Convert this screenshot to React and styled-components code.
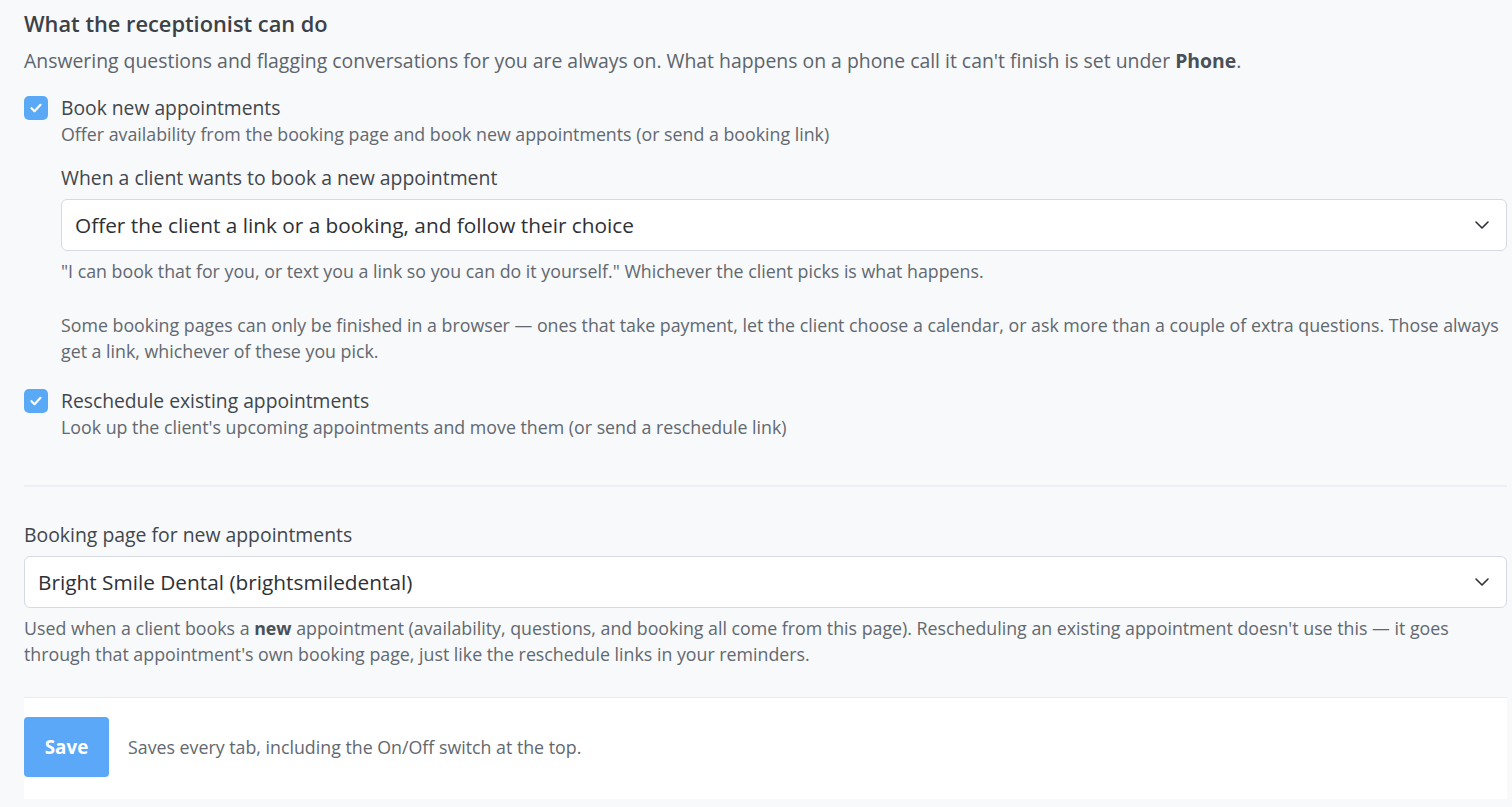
import React, { useState } from "react";
import styled, { createGlobalStyle } from "styled-components";

const GlobalStyle = createGlobalStyle`
  html, body {
    margin: 0;
    padding: 0;
    background: #f7f9fb;
  }
  body {
    font-family: "Open Sans", "Liberation Sans", sans-serif;
    color: #41464c;
  }
`;

const Page = styled.div`
  padding: 10px 5px 0 24px;
  min-height: 807px;
  box-sizing: border-box;
`;

const Heading = styled.h2`
  margin: 0;
  font-size: 21.8px;
  line-height: 28px;
  font-weight: 600;
  color: #3c4147;
`;

const Intro = styled.p`
  margin: 10px 0 0;
  font-size: 19.4px;
  line-height: 26px;
  color: #5d646c;

  b {
    font-weight: 700;
    color: #4a5056;
  }
`;

const Option = styled.div`
  display: flex;
  align-items: flex-start;
  gap: 13px;
  margin-top: ${(p) => p.$top}px;
`;

const Box = styled.button`
  flex: none;
  width: 24px;
  height: 24px;
  margin-top: 1px;
  padding: 0;
  border: none;
  border-radius: 5px;
  background: ${(p) => (p.$on ? "#5aa9f6" : "#fff")};
  box-shadow: ${(p) => (p.$on ? "none" : "inset 0 0 0 1px #c9ced6")};
  display: flex;
  align-items: center;
  justify-content: center;
  cursor: pointer;
`;

const OptionBody = styled.div`
  flex: 1;
  min-width: 0;
`;

const OptionLabel = styled.div`
  font-size: 19.3px;
  line-height: 26px;
  color: #41464c;
`;

const OptionDesc = styled.div`
  font-size: 17.8px;
  line-height: 27px;
  color: #62686f;
`;

const FieldLabel = styled.div`
  margin-top: ${(p) => p.$top}px;
  font-size: 19.4px;
  line-height: 26px;
  color: #41464c;
`;

const SelectWrap = styled.div`
  position: relative;
  margin-top: 8px;
`;

const Select = styled.select`
  appearance: none;
  width: 100%;
  height: 52px;
  box-sizing: border-box;
  padding: 0 44px 0 13px;
  border: 1px solid #d6dae1;
  border-radius: 6px;
  background: #fff;
  font-family: inherit;
  font-size: 20.8px;
  color: #2d3136;
  outline: none;
`;

const Chevron = styled.svg`
  position: absolute;
  right: 17px;
  top: 50%;
  transform: translateY(-50%);
  pointer-events: none;
`;

const Help = styled.p`
  margin: ${(p) => p.$top}px 0 0;
  font-size: 17.8px;
  line-height: 26px;
  color: #62686f;

  b {
    font-weight: 700;
    color: #4a5056;
  }
`;

const Divider = styled.hr`
  margin: 44px 0 0;
  border: none;
  border-top: 2px solid #eceff3;
`;

const Footer = styled.div`
  margin-top: 30px;
  display: flex;
  align-items: center;
  gap: 19px;
  padding: 19px 0 22px;
  background: #fff;
  border-top: 1px solid #e8ebef;
`;

const SaveButton = styled.button`
  width: 85px;
  height: 60px;
  border: none;
  border-radius: 4px;
  background: #5aa8f7;
  color: #fff;
  font-family: inherit;
  font-size: 18.8px;
  font-weight: 700;
  cursor: pointer;
`;

const FooterNote = styled.span`
  font-size: 17.8px;
  color: #62686f;
`;

const Check = () => (
  <svg width="14" height="14" viewBox="0 0 14 14">
    <path d="M2.5 7.2l3 3 6-6.4" fill="none" stroke="#fff" strokeWidth="2.2" strokeLinecap="round" strokeLinejoin="round" />
  </svg>
);

const Dropdown = ({ value, options }) => (
  <SelectWrap>
    <Select defaultValue={value}>
      {options.map((o) => (
        <option key={o}>{o}</option>
      ))}
    </Select>
    <Chevron width="16" height="10" viewBox="0 0 16 10">
      <path d="M2 2l6 6 6-6" fill="none" stroke="#2d3136" strokeWidth="1.6" strokeLinecap="round" strokeLinejoin="round" />
    </Chevron>
  </SelectWrap>
);

const App = () => {
  const [book, setBook] = useState(true);
  const [reschedule, setReschedule] = useState(true);

  return (
    <>
      <GlobalStyle />
      <Page>
        <Heading>What the receptionist can do</Heading>
        <Intro>
          Answering questions and flagging conversations for you are always on. What happens on a phone call it can't finish is set under <b>Phone</b>.
        </Intro>

        <Option $top={21}>
          <Box $on={book} onClick={() => setBook(!book)}>{book && <Check />}</Box>
          <OptionBody>
            <OptionLabel>Book new appointments</OptionLabel>
            <OptionDesc>Offer availability from the booking page and book new appointments (or send a booking link)</OptionDesc>
            <FieldLabel $top={17}>When a client wants to book a new appointment</FieldLabel>
            <Dropdown
              value="Offer the client a link or a booking, and follow their choice"
              options={[
                "Offer the client a link or a booking, and follow their choice",
                "Always book it for the client",
                "Always send a booking link",
              ]}
            />
            <Help $top={7}>
              "I can book that for you, or text you a link so you can do it yourself." Whichever the client picks is what happens.
            </Help>
            <Help $top={28}>
              Some booking pages can only be finished in a browser — ones that take payment, let the client choose a calendar, or ask more than a couple of extra questions. Those always get a link, whichever of these you pick.
            </Help>
          </OptionBody>
        </Option>

        <Option $top={24}>
          <Box $on={reschedule} onClick={() => setReschedule(!reschedule)}>{reschedule && <Check />}</Box>
          <OptionBody>
            <OptionLabel>Reschedule existing appointments</OptionLabel>
            <OptionDesc>Look up the client's upcoming appointments and move them (or send a reschedule link)</OptionDesc>
          </OptionBody>
        </Option>

        <Divider />

        <FieldLabel $top={35}>Booking page for new appointments</FieldLabel>
        <Dropdown
          value="Bright Smile Dental (brightsmiledental)"
          options={["Bright Smile Dental (brightsmiledental)"]}
        />
        <Help $top={7}>
          Used when a client books a <b>new</b> appointment (availability, questions, and booking all come from this page). Rescheduling an existing appointment doesn't use this — it goes through that appointment's own booking page, just like the reschedule links in your reminders.
        </Help>

        <Footer>
          <SaveButton>Save</SaveButton>
          <FooterNote>Saves every tab, including the On/Off switch at the top.</FooterNote>
        </Footer>
      </Page>
    </>
  );
};

export default App;
